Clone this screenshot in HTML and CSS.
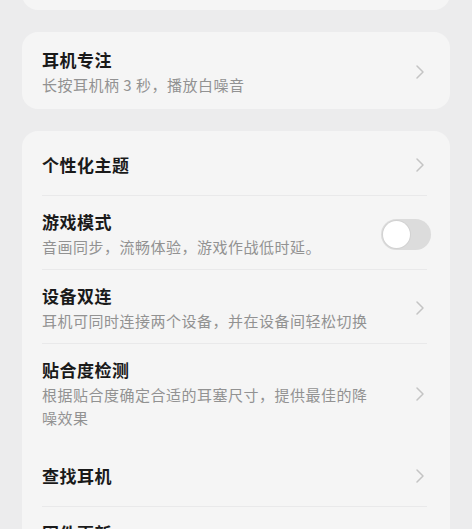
FILE: index.html
```html
<!DOCTYPE html>
<html lang="zh-CN">
<head>
<meta charset="utf-8">
<link rel="stylesheet" href="styles.css">
</head>
<body>
<div class="page">
  <div class="card card-top"></div>

  <div class="card card-single">
    <div class="row noline">
      <div class="text">
        <div class="title">耳机专注</div>
        <div class="sub">长按耳机柄 3 秒，播放白噪音</div>
      </div>
      <svg class="chev" viewBox="0 0 10 16"><path d="M2 2 L8 8 L2 14"/></svg>
    </div>
  </div>

  <div class="card card-list">
    <div class="row single">
      <div class="text"><div class="title">个性化主题</div></div>
      <svg class="chev" viewBox="0 0 10 16"><path d="M2 2 L8 8 L2 14"/></svg>
    </div>
    <div class="row">
      <div class="text">
        <div class="title">游戏模式</div>
        <div class="sub">音画同步，流畅体验，游戏作战低时延。</div>
      </div>
      <div class="toggle"><div class="knob"></div></div>
    </div>
    <div class="row">
      <div class="text">
        <div class="title">设备双连</div>
        <div class="sub">耳机可同时连接两个设备，并在设备间轻松切换</div>
      </div>
      <svg class="chev" viewBox="0 0 10 16"><path d="M2 2 L8 8 L2 14"/></svg>
    </div>
    <div class="row noline tall">
      <div class="text">
        <div class="title">贴合度检测</div>
        <div class="sub">根据贴合度确定合适的耳塞尺寸，提供最佳的降噪效果</div>
      </div>
      <svg class="chev" viewBox="0 0 10 16"><path d="M2 2 L8 8 L2 14"/></svg>
    </div>
    <div class="row single">
      <div class="text"><div class="title">查找耳机</div></div>
      <svg class="chev" viewBox="0 0 10 16"><path d="M2 2 L8 8 L2 14"/></svg>
    </div>
    <div class="row">
      <div class="text">
        <div class="title">固件更新</div>
        <div class="sub">当前已是最新版本</div>
      </div>
      <svg class="chev" viewBox="0 0 10 16"><path d="M2 2 L8 8 L2 14"/></svg>
    </div>
  </div>
</div>
</body>
</html>
```
FILE: styles.css
```css
html, body {
  margin: 0;
  padding: 0;
  background: #ececed;
  height: 100%;
  overflow: hidden;
}
body {
  font-family: "Noto Sans CJK SC", "Noto Sans", sans-serif;
}
.page {
  display: flex;
  flex-direction: column;
  gap: 22px;
  padding: 0 22px;
}
.card {
  background: #f5f5f5;
  border-radius: 16px;
  padding: 0 23px 0 20px;
}
.card-top {
  height: 50px;
  margin-top: -40px;
}
.card-single {
  padding-top: 2px;
  padding-bottom: 2px;
}
.card-list {
  padding-top: 4px;
  padding-bottom: 20px;
}
.row {
  display: flex;
  align-items: center;
  justify-content: space-between;
  padding: 14px 0 11px;
  border-bottom: 1px solid #e9e9ea;
}
.row.noline {
  border-bottom: none;
}
.row.tall {
  padding-bottom: 17px;
}
.row.single {
  padding: 18px 0;
  height: 24px;
  box-sizing: content-box;
}
.text {
  max-width: 334px;
}
.title {
  font-size: 17px;
  font-weight: 700;
  line-height: 24px;
  letter-spacing: 0.5px;
  color: #1a1a1a;
}
.sub {
  margin-top: 1px;
  font-size: 15px;
  line-height: 23px;
  letter-spacing: 0.5px;
  color: #929292;
}
.chev {
  width: 10px;
  height: 16px;
  flex: none;
  margin-right: 2px;
}
.chev path {
  fill: none;
  stroke: #c4c4c4;
  stroke-width: 1.5;
  stroke-linecap: round;
  stroke-linejoin: round;
}
.toggle {
  flex: none;
  width: 50px;
  height: 31px;
  border-radius: 16px;
  background: #dcdcdc;
  margin-right: -4px;
  display: flex;
  align-items: center;
  padding-left: 2px;
  box-sizing: border-box;
}
.knob {
  width: 27px;
  height: 27px;
  border-radius: 50%;
  background: #ffffff;
  box-shadow: 0 0 0 1px #d2d2d2;
}
```
